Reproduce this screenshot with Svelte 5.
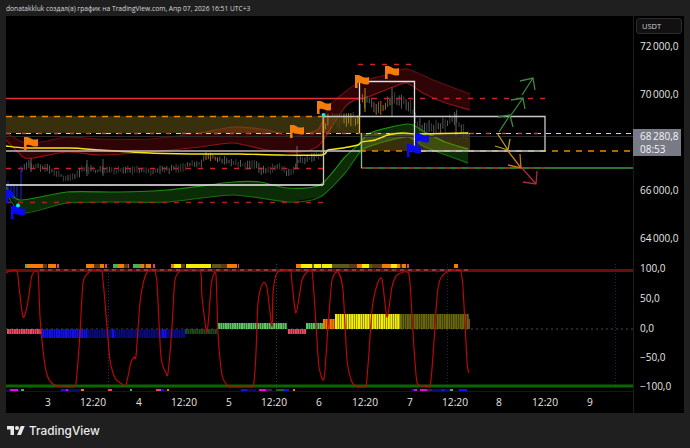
<script>
  // points below are in page pixels, the svg viewBoxes are offset to match
  const PLOT_W = 627;

  function smooth(pts, lo = -Infinity, hi = Infinity) {
    const clamp = (v) => Math.min(hi, Math.max(lo, v)).toFixed(1);
    let d = `M${pts[0][0]} ${pts[0][1]}`;
    for (let i = 0; i < pts.length - 1; i++) {
      const p0 = pts[i - 1] || pts[i];
      const p1 = pts[i];
      const p2 = pts[i + 1];
      const p3 = pts[i + 2] || p2;
      const k = 0.12;
      d += ` C${(p1[0] + (p2[0] - p0[0]) * k).toFixed(1)} ${clamp(p1[1] + (p2[1] - p0[1]) * k)} ${(p2[0] - (p3[0] - p1[0]) * k).toFixed(1)} ${clamp(p2[1] - (p3[1] - p1[1]) * k)} ${p2[0]} ${p2[1]}`;
    }
    return d;
  }

  function closeBand(top, bottom) {
    const back = [...bottom].reverse().map((p) => `L${p[0]} ${p[1]}`).join(" ");
    return `${smooth(top)} ${back} Z`;
  }

  const redTop = [[6,133],[25,143],[47,141],[67,137],[100,139],[150,139],[200,133],[233,127],[267,130],[293,136],[317,130],[323,120],[330,105],[345,92],[360,82],[385,75],[407,69],[433,80],[470,94]];
  const redBot = [[6,140],[23,157],[33,158],[67,152],[100,155],[150,152],[200,147],[233,143],[267,150],[300,152],[317,147],[323,140],[345,107],[355,100],[368,97],[393,87],[407,83],[423,93],[443,102],[470,110]];
  const greenTop = [[6,187],[20,200],[67,192],[117,192],[167,190],[233,182],[260,182],[287,188],[320,185],[345,157],[360,143],[370,133],[408,124],[425,132],[445,142],[468,149]];
  const greenBot = [[6,193],[23,213],[67,203],[117,202],[167,202],[233,195],[290,202],[320,197],[345,173],[362,150],[380,143],[408,137],[425,147],[468,163]];

  const maPath = [[6,146],[25,148],[70,148],[100,150],[150,153],[200,154],[240,154],[280,155],[322,155],[328,150],[343,148],[358,145],[362,142],[375,140],[388,135],[403,133],[418,134],[468,133]];

  const osc = [[6,273],[10,271],[17,271],[19,287],[23,317],[27,307],[31,280],[33,273],[38,272],[40,317],[43,350],[47,375],[53,384],[62,387],[73,387],[76,383],[80,333],[83,283],[88,273],[95,270],[102,272],[107,327],[110,360],[115,378],[122,384],[126,385],[131,362],[134,357],[136,356],[140,303],[144,280],[148,271],[154,270],[157,283],[161,357],[166,373],[168,373],[172,327],[175,280],[182,270],[200,270],[202,297],[207,332],[211,287],[213,276],[216,275],[218,333],[222,375],[227,385],[230,387],[253,387],[258,303],[263,283],[267,288],[272,327],[273,293],[277,273],[290,270],[292,283],[296,313],[302,280],[307,272],[312,270],[317,340],[319,367],[324,379],[328,327],[332,280],[338,272],[343,290],[347,360],[352,382],[358,387],[366,387],[372,310],[377,285],[382,279],[387,317],[392,287],[397,275],[407,272],[410,283],[417,383],[430,387],[437,297],[440,280],[447,272],[460,270],[463,287],[467,362],[469,373]];

  // candle centre line
  const priceLine = [[22,170],[30,164],[36,167],[45,167],[55,172],[65,178],[75,176],[85,168],[95,171],[105,170],[115,171],[130,170],[150,171],[165,170],[180,168],[190,165],[203,163],[204,157],[215,158],[225,161],[235,163],[245,166],[255,164],[262,171],[270,169],[280,167],[287,172],[295,170],[298,161],[305,160],[320,155],[324,150],[326,120],[335,120],[345,121],[358,120],[362,100],[368,100],[375,106],[382,110],[390,100],[400,100],[410,105],[413,112],[418,125],[425,129],[435,127],[445,125],[452,120],[457,118],[460,128],[465,134],[470,134]];

  function priceAt(x) {
    for (let i = 0; i < priceLine.length - 1; i++) {
      const a = priceLine[i], b = priceLine[i + 1];
      if (x <= b[0]) return a[1] + ((b[1] - a[1]) * (x - a[0])) / (b[0] - a[0]);
    }
    return 134;
  }

  let seed = 17;
  function rnd() {
    seed = (seed * 16807) % 2147483647;
    return seed / 2147483647;
  }

  function candleColor(x) {
    if ((x > 204 && x < 224) || (x > 360 && x < 391)) return rnd() > 0.4 ? "#a8681a" : "#5e5e5e";
    if (x >= 325 && x < 360) return rnd() > 0.4 ? "#a08420" : "#4e4210";
    return rnd() > 0.5 ? "#5a5a5a" : "#3e3e3e";
  }

  const candles = [];
  for (let x = 22; x < 470; x += 2.3) {
    const c = priceAt(x);
    const big = x >= 325 ? 1.7 : 1;
    candles.push({
      x,
      y1: c - (1 + rnd() * 4) * big,
      y2: c + (1 + rnd() * 4) * big,
      color: candleColor(x),
    });
  }
  const spikes = [[21,166,200,"#1a2bd8"],[31,158,172,"#666"],[87,160,176,"#5d5d5d"],[103,159,176,"#5d5d5d"],[297,146,168,"#666"],[392,87,116,"#666"],[456,114,135,"#666"],[365,88,112,"#a98a1e"],[8,181,195,"#1a2bd8"],[11,184,197,"#1a2bd8"],[14,184,197,"#1a2bd8"],[17,186,197,"#1a2bd8"]];

  const arrows = [
    { c: "#3b8a40", from: [499,132], to: [510,115], a: [498,117], b: [513,127] },
    { c: "#3b8a40", from: [511,115], to: [523,98], a: [511,100], b: [525,109] },
    { c: "#3b8a40", from: [522,95], to: [533,78], a: [520,81], b: [535,90] },
    { c: "#b8a020", from: [497,133], to: [508,150], a: [495,146], b: [510,139] },
    { c: "#c87a10", from: [508,151], to: [521,168], a: [508,165], b: [520,154] },
    { c: "#b02a3a", from: [522,168], to: [536,184], a: [523,182], b: [537,171] },
  ];

  const orangeFlags = [[24,150],[290,138],[317,114],[355,88],[385,79]];
  const blueFlags = [[11,219],[407,157],[415,146]];
  const flagPath = (x, y, w = 14) =>
    `M${x} ${y}V${y - 13}H${x + 3}C${x + 6} ${y - 13} ${x + 8} ${y - 9} ${x + w} ${y - 11}V${y - 4}C${x + 9} ${y - 2} ${x + 6} ${y - 6} ${x + 2.6} ${y - 5}V${y}Z`;

  const orange = "#f57c00", brown = "#5d3a14", olive = "#5e5a12", yellow = "#f5ee00", pink = "#f0405a", green = "#4caf50";
  const topStrip = [[25,27,green],[27,43,orange],[43,47,brown],[48,56,orange],[57,59,pink],[86,94,orange],[94,100,brown],[100,104,orange],[105,107,pink],[113,118,green],[118,124,orange],[124,128,brown],[128,129,pink],[133,141,green],[141,144,orange],[144,146,brown],[146,151,orange],[153,155,pink],[171,174,orange],[174,181,yellow],[181,185,brown],[186,211,yellow],[212,221,olive],[221,227,brown],[227,237,orange],[238,239,pink],[296,301,orange],[301,312,yellow],[312,314,olive],[314,321,yellow],[321,322,olive],[322,332,yellow],[332,349,olive],[349,357,brown],[357,362,orange],[362,369,yellow],[369,372,olive],[372,382,brown],[382,391,orange],[391,397,yellow],[397,400,orange],[400,402,brown],[402,406,orange],[407,409,pink],[454,458,orange]];

  const blue = "#1010f0", navy = "#0a0a70", magenta = "#f000e0", purple = "#4a1560";
  const bottomStrip = [[6,10,navy],[10,18,magenta],[18,20,navy],[21,24,green],[61,66,blue],[66,68,magenta],[68,81,navy],[81,84,orange],[108,112,pink],[130,132,green],[156,161,pink],[161,164,blue],[165,166,navy],[167,169,orange],[241,247,blue],[247,256,navy],[259,266,magenta],[266,272,purple],[276,284,"#1d5c20"],[284,289,blue],[293,295,orange],[412,414,blue],[414,417,magenta],[420,427,magenta],[427,432,purple],[432,441,navy],[441,445,blue],[445,450,navy],[450,453,green],[459,467,blue]];

  // histogram runs: from, to, top, bottom, colour
  const runs = [[7,42,329,334,"#f0495f"],[42,87,329,338,"#1212f0"],[87,112,329,338,"#0a0a80"],[112,114,329,338,"#1212f0"],[114,162,329,338,"#0a0a80"],[162,167,329,338,"#1212f0"],[167,185,329,338,"#0a0a80"],[185,217,329,334,"#1d4a20"],[218,287,323,329,"#5cc864"],[288,305,329,334,"#f0495f"],[306,323,323,329,"#5cc864"],[323,335,319,329,"#f57c00"],[335,400,314,329,"#f5ee00"],[400,468,314,329,"#6a6610"],[468,470,319,329,"#7a4a10"]];
  const bars = [];
  for (const [from, to, y1, y2, color] of runs) {
    for (let x = from; x < to; x += 2.3) bars.push({ x, y: y1, h: y2 - y1, color });
  }

  const times = [[48,"3"],[93,"12:20"],[139,"4"],[184,"12:20"],[229,"5"],[274,"12:20"],[319,"6"],[365,"12:20"],[410,"7"],[455,"12:20"],[499,"8"],[545,"12:20"],[590,"9"]];
  const scaleLabels = [[46,"72\u2009000,0"],[94,"70\u2009000,0"],[190,"66\u2009000,0"],[238,"64\u2009000,0"],[268,"100,0"],[298,"50,0"],[328,"0,0"],[357,"−50,0"],[386,"−100,0"]];
</script>

<div class="page">
  <div class="caption">donatakkluk создал(а) график на TradingView.com, Апр 07, 2026 16:51 UTC+3</div>

  <div class="frame">
    <div class="plots">
      <svg class="pane" viewBox="6 16 {PLOT_W} 247" width={PLOT_W} height="247">
        <path d={closeBand(redTop, redBot)} fill="#2e0407" />
        <path d={smooth(redTop)} class="edge" stroke="#5e1013" />
        <path d={smooth(redBot)} class="edge" stroke="#8c1217" />
        <path d={closeBand(greenTop, greenBot)} fill="#0c2c07" />
        <path d={smooth(greenTop)} class="edge" stroke="#1f8a12" />
        <path d={smooth(greenBot)} class="edge" stroke="#176c0e" />

        <rect x="6" y="116" width="354" height="17" fill="#b89a28" opacity="0.3" />
        <rect x="360" y="133" width="110" height="18" fill="#b89a28" opacity="0.3" />

        <line x1="6" x2="633" y1="136.5" y2="136.5" stroke="#2a2a2a" />
        <line x1="6" x2="360" y1="98.5" y2="98.5" stroke="#e02f35" stroke-width="1.3" />
        <line x1="360" x2="545" y1="98.5" y2="98.5" class="dash-red" />
        <line x1="358" x2="415" y1="64.5" y2="64.5" class="dash-red" />
        <line x1="6" x2="323" y1="168.5" y2="168.5" class="dash-red" />
        <line x1="6" x2="323" y1="202.5" y2="202.5" class="dash-red dim" />
        <line x1="6" x2="326" y1="116.5" y2="116.5" class="dash-orange" />
        <line x1="360" x2="633" y1="151" y2="151" class="dash-orange" />
        <line x1="361" x2="633" y1="168" y2="168" stroke="#3e9a42" stroke-width="1.3" />
        <line x1="361" x2="545" y1="168" y2="168" class="dash-red dim" />
        <line x1="6" x2="633" y1="133.5" y2="133.5" class="dash-yellow" />
        <line x1="6" x2="545" y1="133.5" y2="133.5" class="dash-red over" />

        {#each candles as c}
          <line x1={c.x} x2={c.x} y1={c.y1} y2={c.y2} stroke={c.color} stroke-width="1" />
        {/each}
        {#each spikes as s}
          <line x1={s[0]} x2={s[0]} y1={s[1]} y2={s[2]} stroke={s[3]} stroke-width="1" />
        {/each}

        <path d={smooth(maPath)} fill="none" stroke="#f5e812" stroke-width="1.4" />

        <g fill="none" stroke-width="1.3">
          <path d="M6 151H323" stroke="#c9b5b5" />
          <path d="M6 185H323" stroke="#f2f2f2" />
          <path d="M323.5 185V116.5H545V151H414.5" stroke="#c8c8c8" />
          <path d="M323 151V116" stroke="#d98a26" />
          <path d="M359.5 116V81.5H414.5V151" stroke="#e0e0e0" />
          <path d="M323 151H360" stroke="#c8c8c8" />
          <path d="M359.5 116V133" stroke="#d8c04a" />
          <path d="M361.5 133V168" stroke="#7ecb84" />
        </g>

        {#each arrows as a}
          <path d="M{a.from[0]} {a.from[1]}L{a.to[0]} {a.to[1]}M{a.a[0]} {a.a[1]}L{a.to[0]} {a.to[1]}L{a.b[0]} {a.b[1]}" fill="none" stroke={a.c} stroke-width="1.3" />
        {/each}

        {#each orangeFlags as f}
          <path d={flagPath(f[0], f[1])} fill="#f57c0a" />
        {/each}
        <path d={flagPath(6, 203, 7)} fill="#0a0af0" />
        {#each blueFlags as f}
          <path d={flagPath(f[0], f[1])} fill="#0a0af0" />
        {/each}
        <circle cx="18" cy="205.5" r="2" fill="#19e6e6" />
        <circle cx="323.5" cy="115" r="2" fill="#19e6e6" />
      </svg>

      <svg class="pane pane-low" viewBox="6 263 {PLOT_W} 128" width={PLOT_W} height="128">
        {#each topStrip as s}
          <rect x={s[0]} y="264" width={s[1] - s[0]} height="4" fill={s[2]} />
        {/each}
        <line x1="6" x2="633" y1="270.5" y2="270.5" stroke="#6e0c0c" stroke-width="3" />
        <line x1="40" x2="470" y1="270" y2="270" stroke="#a86a6a" stroke-dasharray="4 4" stroke-width="1" />
        <line x1="6" x2="633" y1="386" y2="386" stroke="#0c6600" stroke-width="3" />
        <line x1="6" x2="633" y1="329" y2="329" stroke="#4a4a4a" stroke-dasharray="2 3" />

        <line x1="108.5" x2="108.5" y1="264" y2="390" class="vmark" stroke="#4a1c70" />
        <line x1="276.5" x2="276.5" y1="264" y2="390" class="vmark" stroke="#1a4d1a" />
        <line x1="447.5" x2="447.5" y1="264" y2="390" class="vmark" stroke="#3a1858" />
        <line x1="615.5" x2="615.5" y1="264" y2="390" class="vmark" stroke="#3a1858" />

        {#each bars as b}
          <rect x={b.x} y={b.y} width="2" height={b.h} fill={b.color} />
        {/each}

        {#each bottomStrip as s}
          <rect x={s[0]} y="389" width={s[1] - s[0]} height="2" fill={s[2]} />
        {/each}

        <path d={smooth(osc, 269, 387)} fill="none" stroke="#b80808" stroke-width="1.2" />
      </svg>

      <div class="time-axis">
        {#each times as t}
          <span class="tick" style="left: {t[0] - 6}px">{t[1]}</span>
        {/each}
      </div>
    </div>

    <div class="scale">
      <div class="unit">USDT</div>
      {#each scaleLabels as l}
        <span class="price" style="top: {l[0] - 16}px">{l[1]}</span>
      {/each}
      <div class="last">
        <span>68&#8201;280,8</span>
        <span>08:53</span>
      </div>
    </div>
  </div>

  <div class="brand">
    <svg viewBox="0 0 36 18" width="18" height="9" aria-hidden="true">
      <path d="M14 18H7V7H0V0h14v18zM28 18h-8l7.5-18h8L28 18z" fill="#e8e8e8" />
      <circle cx="20" cy="4" r="4" fill="#e8e8e8" />
    </svg>
    <span>TradingView</span>
  </div>
</div>

<style>
  :global(body) {
    margin: 0;
    background: #1f1f1f;
  }

  .page {
    width: 690px;
    height: 448px;
    overflow: hidden;
    font-family: "Open Sans", "Liberation Sans", sans-serif;
    color: #e6e6e6;
  }

  .caption {
    height: 16px;
    padding-left: 6px;
    font-size: 6.7px;
    line-height: 18px;
    color: #d8d8d8;
    white-space: nowrap;
  }

  .frame {
    display: flex;
    width: 678px;
    height: 397px;
    margin-left: 6px;
    background: #000;
  }

  .plots {
    display: flex;
    flex-direction: column;
    width: 627px;
  }

  svg {
    display: block;
  }

  .pane {
    flex: none;
    overflow: hidden;
    filter: blur(0.3px);
  }

  .pane-low {
    border-top: 0;
  }

  .edge {
    fill: none;
    stroke-width: 1.2;
  }

  .dash-red {
    stroke: #d81f1f;
    stroke-width: 1.3;
    stroke-dasharray: 5 7;
  }

  .dim {
    stroke: #a82018;
  }

  .over {
    stroke: #e8301c;
    stroke-dasharray: 4 12;
  }

  .dash-orange {
    stroke: #e8860c;
    stroke-width: 1.4;
    stroke-dasharray: 6 6;
  }

  .dash-yellow {
    stroke: #f0e62a;
    stroke-width: 1.2;
    stroke-dasharray: 5 5;
  }

  .vmark {
    stroke-dasharray: 1 2;
  }

  .time-axis {
    position: relative;
    height: 22px;
    border-top: 1px solid #161616;
    box-sizing: border-box;
  }

  .tick {
    position: absolute;
    top: 2px;
    transform: translateX(-50%);
    font-size: 10.2px;
    line-height: 16px;
    font-weight: 500;
  }

  .scale {
    position: relative;
    width: 51px;
    border-left: 1px solid #1c1c1c;
    box-sizing: border-box;
  }

  .unit {
    margin: 2px 2px 0 2px;
    height: 14px;
    padding-left: 5px;
    border: 1px solid #2c2c2c;
    border-radius: 3px;
    background: #111;
    font-size: 7.5px;
    line-height: 14px;
    color: #cfcfcf;
  }

  .price {
    position: absolute;
    left: 6px;
    transform: translateY(-50%);
    font-size: 10px;
    line-height: 14px;
    white-space: nowrap;
  }

  .last {
    position: absolute;
    top: 113px;
    left: -1px;
    display: flex;
    flex-direction: column;
    justify-content: center;
    width: 48px;
    height: 27px;
    padding-left: 7px;
    box-sizing: border-box;
    background: #787b86;
    font-size: 10px;
    line-height: 13px;
    color: #f4f4f4;
    white-space: nowrap;
  }

  .brand {
    display: flex;
    align-items: center;
    gap: 4px;
    height: 35px;
    padding-left: 7px;
    font-family: "Inter", "Liberation Sans", sans-serif;
    font-size: 11.8px;
    font-weight: 500;
    color: #ececec;
  }
</style>
